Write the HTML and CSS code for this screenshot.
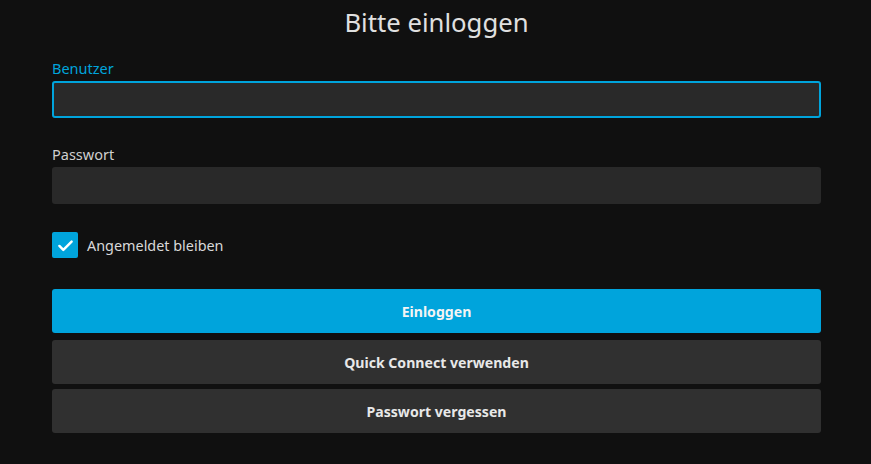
FILE: index.html
```html
<!DOCTYPE html>
<html lang="de">
<head>
<meta charset="utf-8">
<title>Bitte einloggen</title>
<link rel="stylesheet" href="styles.css">
</head>
<body>
<div class="page">
  <h1 class="title">Bitte einloggen</h1>
  <form class="form">
    <div class="field">
      <label class="label label-focus" for="user">Benutzer</label>
      <input class="input input-focus" id="user" type="text">
    </div>
    <div class="field">
      <label class="label" for="pw">Passwort</label>
      <input class="input" id="pw" type="password">
    </div>
    <label class="check">
      <span class="box">
        <svg viewBox="0 0 24 24" width="21" height="21"><path d="M5 12.5l4.5 4.5L19 7.5" fill="none" stroke="#fff" stroke-width="2.8" stroke-linecap="round" stroke-linejoin="round"/></svg>
      </span>
      <span class="check-text">Angemeldet bleiben</span>
    </label>
    <div class="buttons">
      <button type="button" class="btn btn-primary">Einloggen</button>
      <button type="button" class="btn">Quick Connect verwenden</button>
      <button type="button" class="btn">Passwort vergessen</button>
    </div>
  </form>
</div>
</body>
</html>
```
FILE: styles.css
```css
html, body {
  margin: 0;
  padding: 0;
  background: #101010;
  font-family: "Noto Sans", "Open Sans", sans-serif;
  color: rgba(255,255,255,0.87);
}
.page {
  padding: 0 50px 0 52px;
}
.title {
  margin: 0;
  padding-top: 5px;
  height: 47px;
  text-align: center;
  font-size: 25.7px;
  font-weight: 400;
  line-height: 36px;
  color: #e0e0e0;
}
.form {
  display: flex;
  flex-direction: column;
}
.field {
  display: flex;
  flex-direction: column;
  margin-bottom: 20px;
}
.field + .field {
  margin-bottom: 28px;
}
.label {
  font-size: 14.5px;
  line-height: 20px;
  height: 20px;
  margin-top: 6px;
  margin-bottom: 3px;
  color: #cfcfcf;
}
.label-focus {
  color: #00a4dc;
}
.input {
  box-sizing: border-box;
  height: 37px;
  margin: 0;
  background: #292929;
  border: 2px solid #292929;
  border-radius: 3px;
  outline: none;
  color: #fff;
  font: inherit;
  padding: 0 8px;
}
.input-focus {
  border-color: #00a4dc;
}
.check {
  display: flex;
  align-items: center;
  gap: 9px;
  height: 26px;
  margin-bottom: 31px;
}
.box {
  box-sizing: border-box;
  width: 26px;
  height: 26px;
  border-radius: 2px;
  background: #00a4dc;
  display: flex;
  align-items: center;
  justify-content: center;
}
.check-text {
  font-size: 14.4px;
  color: #d9d9d9;
}
.buttons {
  display: flex;
  flex-direction: column;
  gap: 5px;
}
.btn {
  height: 44px;
  margin: 0;
  border: 0;
  border-radius: 3px;
  background: #303030;
  color: #e8e8e8;
  font-family: inherit;
  font-size: 14.1px;
  font-weight: 700;
}
.btn-primary {
  background: #00a4dc;
  color: #f4f4f4;
  margin-bottom: 2px;
}
```
